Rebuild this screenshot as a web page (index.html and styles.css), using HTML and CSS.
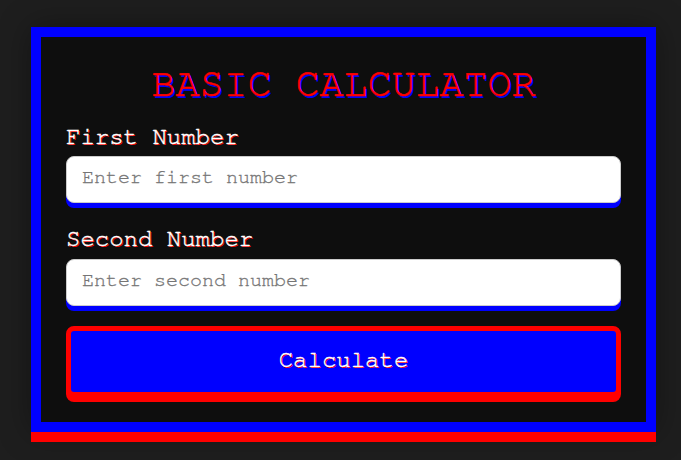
FILE: index.html
```html
<!DOCTYPE html>
<html>
<head>
<meta charset="utf-8">
<title>Basic Calculator</title>
<link rel="stylesheet" href="styles.css">
</head>
<body>
<div class="calculator">
  <h1 class="title">BASIC CALCULATOR</h1>
  <label class="label" for="num1">First Number</label>
  <input class="field" id="num1" type="text" placeholder="Enter first number">
  <label class="label label-second" for="num2">Second Number</label>
  <input class="field field-last" id="num2" type="text" placeholder="Enter second number">
  <button class="calc-btn" type="button">Calculate</button>
</div>
</body>
</html>
```
FILE: styles.css
```css
html, body {
  margin: 0;
  padding: 0;
}
body {
  background: #1e1e1e;
  font-family: "Nimbus Mono PS", "Nimbus Mono L", "FreeMono", "Courier 10 Pitch", "Courier", "Liberation Mono", monospace;
  padding: 27px 25px 0 31px;
  height: 460px;
  box-sizing: border-box;
}
.calculator {
  width: 625px;
  box-sizing: border-box;
  background: #0e0e0e;
  border: 10px solid #0000ff;
  box-shadow: 0 10px 0 #ff0000, 0 0 30px rgba(0, 0, 0, 0.35);
  padding: 26px 25px 25px 25px;
  display: flex;
  flex-direction: column;
}
.title {
  margin: -1px 0 18px 0;
  font-size: 40px;
  font-weight: normal;
  color: #ff0000;
  text-align: center;
  text-shadow: 2px 2px 0 #0000ff;
  -webkit-text-stroke: 0.5px #ff0000;
  line-height: 45px;
}
.label {
  display: block;
  font-size: 24px;
  line-height: 27px;
  color: #ffffff;
  text-shadow: 1px 1px 0 #ff0000;
  -webkit-text-stroke: 0.4px #ffffff;
  margin-top: -1px;
  margin-bottom: 5px;
}
.label-second {
  margin-top: -2px;
  margin-bottom: 6px;
}
.field {
  display: block;
  width: 100%;
  box-sizing: border-box;
  height: 47px;
  padding: 0 15px 5px 15px;
  font-family: inherit;
  font-size: 20px;
  color: #333;
  background: #ffffff;
  border: 1px solid #cccccc;
  border-radius: 8px;
  box-shadow: 0 5px 0 #0000ff;
  outline: none;
  margin-bottom: 25px;
}
.field::placeholder {
  color: #757575;
  -webkit-text-stroke: 0.3px #757575;
}
.field-last {
  margin-bottom: 20px;
}
.calc-btn {
  display: block;
  width: 100%;
  height: 71px;
  box-sizing: border-box;
  padding: 0 0 4px 0;
  background: #0000ff;
  border: 5px solid #ff0000;
  border-radius: 8px;
  box-shadow: 0 5px 0 #ff0000;
  color: #ffffff;
  font-family: inherit;
  font-size: 24px;
  text-shadow: 1px 1px 0 #ff0000;
  -webkit-text-stroke: 0.4px #ffffff;
  cursor: pointer;
}
```
